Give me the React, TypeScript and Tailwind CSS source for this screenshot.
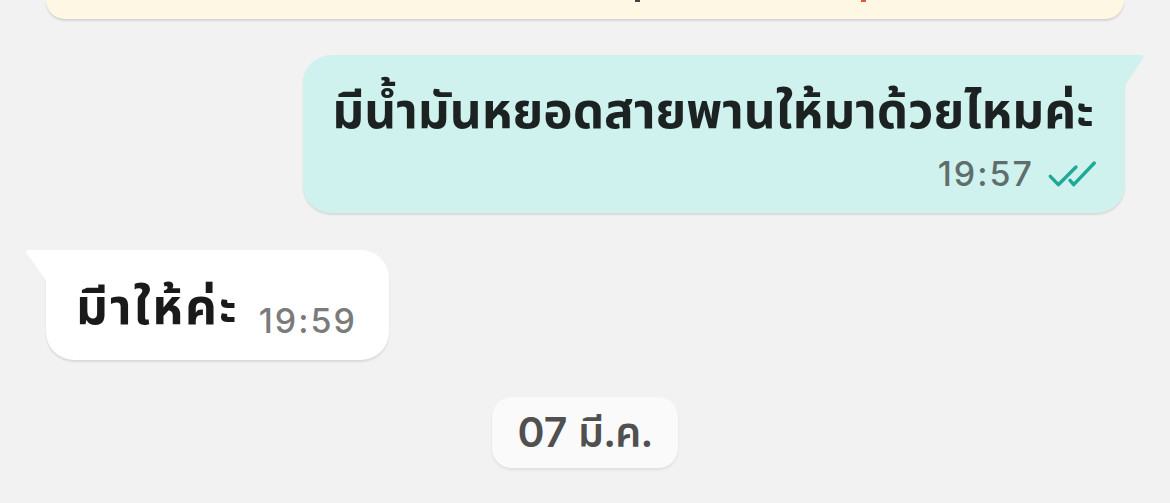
const thai = { fontFamily: '"Noto Sans", "Noto Sans Thai", "Loma", "Garuda", "Liberation Sans", sans-serif' };
const digits = { fontFamily: "Inter, sans-serif" };

const DoubleCheck = () => (
  <svg width="50" height="28" viewBox="0 0 50 28" fill="none">
    <path
      d="M3.3 16.3 L11.3 24.7 L29 7"
      stroke="#1fa797"
      strokeWidth="3.4"
      strokeLinecap="round"
      strokeLinejoin="round"
    />
    <path
      d="M23 20.3 L26.7 24.7 L47.3 3"
      stroke="#1fa797"
      strokeWidth="3.4"
      strokeLinecap="round"
      strokeLinejoin="round"
    />
  </svg>
);

const App = () => {
  return (
    <div
      className="w-full h-[503px] overflow-hidden bg-[#f2f2f2] flex flex-col"
      style={thai}
    >
      {/* previous message, cut off at the top */}
      <div className="mx-[46px] h-[19px] shrink-0 rounded-b-[22px] bg-[#fef7e3] shadow-[0_2px_2px_rgba(0,0,0,0.12)] relative">
        <div className="absolute left-[589px] top-0 w-[5px] h-[2px] bg-[#444]" />
        <div className="absolute left-[815px] top-0 w-[5px] h-[2px] bg-[#e0573c]" />
      </div>

      {/* outgoing */}
      <div className="flex justify-end pr-[45px] mt-[36px]">
        <div className="relative bg-[#cff2ee] rounded-[28px] rounded-tr-none shadow-[0_2px_2px_rgba(0,0,0,0.1)] pl-[29px] pr-[31px] pt-[24px] pb-[19px] flex flex-col items-end">
          <svg
            className="absolute top-0 right-[-20px]"
            width="21"
            height="32"
            viewBox="0 0 21 32"
          >
            <path d="M0 0 H17 Q21 0 19 3.5 L0 32 Z" fill="#cff2ee" />
          </svg>
          <p className="text-[49.5px] leading-[60px] font-bold text-[#1b2221] whitespace-nowrap">
            มีน้ำมันหยอดสายพานให้มาด้วยไหมค่ะ
          </p>
          <div className="flex items-center gap-[13px] mt-[15px] mr-[-3px]">
            <span
              className="text-[34px] leading-[40px] tracking-[2px] text-[#5f6e6c] font-medium"
              style={digits}
            >
              19:57
            </span>
            <DoubleCheck />
          </div>
        </div>
      </div>

      {/* incoming */}
      <div className="flex pl-[46px] mt-[37px]">
        <div className="relative bg-white rounded-[28px] rounded-tl-none shadow-[0_2px_2px_rgba(0,0,0,0.1)] pl-[30px] pr-[32px] h-[110px] flex items-center gap-[20px]">
          <svg
            className="absolute top-0 left-[-21px]"
            width="22"
            height="32"
            viewBox="0 0 22 32"
          >
            <path d="M22 0 H4 Q0 0 2 3.5 L22 32 Z" fill="#ffffff" />
          </svg>
          <p className="text-[49.5px] leading-[60px] tracking-[2px] font-bold text-[#1a1a1a] whitespace-nowrap">
            มีาให้ค่ะ
          </p>
          <span
            className="text-[34px] leading-[40px] tracking-[2px] text-[#7b7b7b] font-medium mt-[31px]"
            style={digits}
          >
            19:59
          </span>
        </div>
      </div>

      {/* date divider */}
      <div className="flex justify-center mt-[37px]">
        <div className="bg-[#fafafa] rounded-[20px] shadow-[0_2px_3px_rgba(0,0,0,0.08)] h-[71px] px-[25px] flex items-center">
          <span className="text-[41px] font-semibold text-[#505050] whitespace-nowrap">
            <span style={digits}>07</span> มี.ค.
          </span>
        </div>
      </div>
    </div>
  );
};

export default App;
